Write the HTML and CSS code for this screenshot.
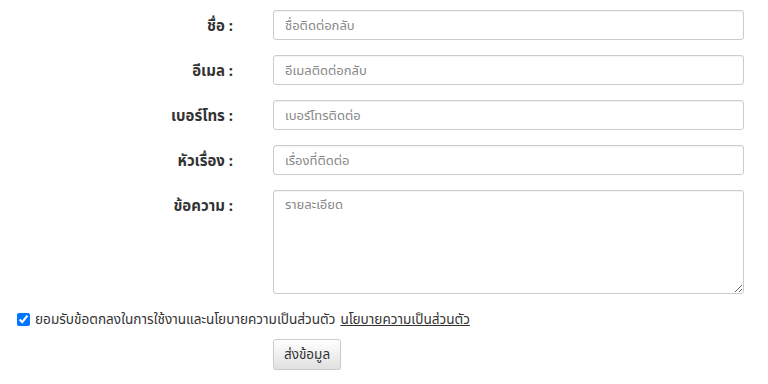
FILE: index.html
```html
<!DOCTYPE html>
<html lang="th">
<head>
    <meta charset="UTF-8">
    <title>ติดต่อเรา</title>
    <link rel="stylesheet" href="styles.css">
</head>
<body>
    <form class="contact-form">
        <div class="row">
            <label class="label" for="name">ชื่อ :</label>
            <input class="field" id="name" type="text" placeholder="ชื่อติดต่อกลับ">
        </div>
        <div class="row">
            <label class="label" for="email">อีเมล :</label>
            <input class="field" id="email" type="text" placeholder="อีเมลติดต่อกลับ">
        </div>
        <div class="row">
            <label class="label" for="phone">เบอร์โทร :</label>
            <input class="field" id="phone" type="text" placeholder="เบอร์โทรติดต่อ">
        </div>
        <div class="row">
            <label class="label" for="subject">หัวเรื่อง :</label>
            <input class="field" id="subject" type="text" placeholder="เรื่องที่ติดต่อ">
        </div>
        <div class="row">
            <label class="label" for="message">ข้อความ :</label>
            <textarea class="field area" id="message" placeholder="รายละเอียด"></textarea>
        </div>
        <div class="agree">
            <input type="checkbox" id="accept" checked>
            <label for="accept">ยอมรับข้อตกลงในการใช้งานและนโยบายความเป็นส่วนตัว</label>
            <a href="#">นโยบายความเป็นส่วนตัว</a>
        </div>
        <div class="actions">
            <button class="submit" type="button">ส่งข้อมูล</button>
        </div>
    </form>
</body>
</html>
```

FILE: styles.css
```css
body {
    margin: 0;
    background-color: #fff;
    font-family: "Noto Sans", "Noto Sans Thai", sans-serif;
    font-size: 13px;
    color: #333;
}
.contact-form {
    padding: 10px 24px 0 16px;
}
.row {
    display: flex;
    align-items: flex-start;
    margin-bottom: 15px;
}
.label {
    width: 257px;
    padding-right: 40px;
    text-align: right;
    font-size: 15px;
    font-weight: bold;
    line-height: 30px;
    box-sizing: border-box;
    flex-shrink: 0;
}
.field {
    flex: 1;
    height: 30px;
    padding: 4px 11px;
    border: 1px solid #ccc;
    border-radius: 3px;
    font-family: inherit;
    font-size: 13px;
    color: #555;
    box-sizing: border-box;
    box-shadow: inset 0 1px 1px rgba(0, 0, 0, 0.05);
}
.field::placeholder {
    color: #888;
}
.area {
    height: 104px;
    resize: vertical;
}
.agree {
    display: flex;
    align-items: center;
    margin-top: 8px;
    font-size: 13.6px;
    color: #333;
}
.agree input {
    margin: 0 5px 0 1px;
    width: 13px;
    height: 13px;
}
.agree a {
    margin-left: 5px;
    color: #333;
}
.actions {
    padding-left: 257px;
    margin-top: 9px;
}
.submit {
    height: 31px;
    padding: 0 10px;
    border: 1px solid #ccc;
    border-radius: 3px;
    background: linear-gradient(#fff, #e0e0e0);
    font-family: inherit;
    font-size: 13.5px;
    color: #333;
    box-shadow: 0 1px 1px rgba(0, 0, 0, 0.1);
}
```
